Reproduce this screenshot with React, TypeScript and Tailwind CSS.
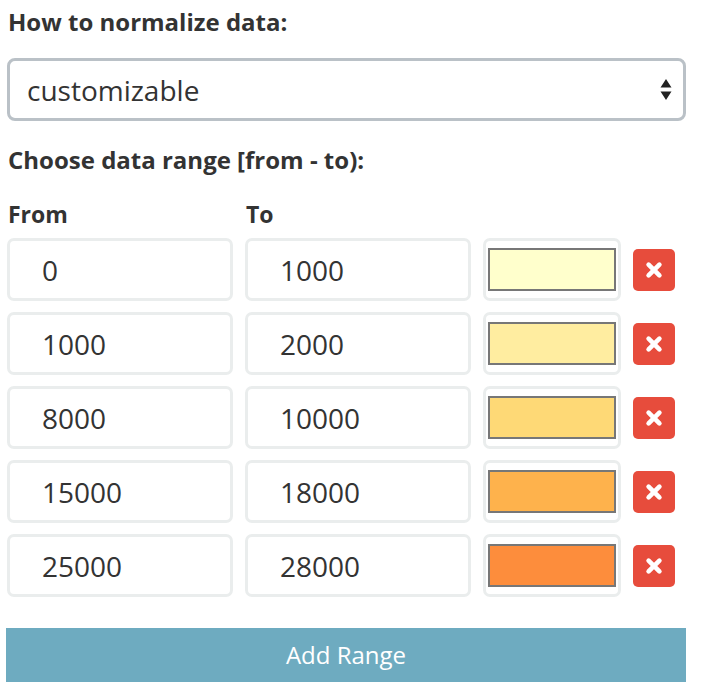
const RANGES = [
  { from: '0', to: '1000', color: '#ffffcc' },
  { from: '1000', to: '2000', color: '#ffeda0' },
  { from: '8000', to: '10000', color: '#fed976' },
  { from: '15000', to: '18000', color: '#feb24c' },
  { from: '25000', to: '28000', color: '#fd8d3c' },
]

function XIcon() {
  return (
    <svg width="18" height="18" viewBox="0 0 18 18" aria-hidden>
      <path d="M3.6 3.6 L14.4 14.4 M14.4 3.6 L3.6 14.4" stroke="#fff" strokeWidth="4.6" strokeLinecap="round" />
    </svg>
  )
}

export default function App() {
  return (
    <div className="w-[718px] h-[698px] bg-white text-[#333] pl-[7px] pt-[6px] font-['Open_Sans',sans-serif]">
      {/* Normalize */}
      <h3 className="text-[24px] font-bold leading-[32px] pl-px">How to normalize data:</h3>
      <div className="mt-[20px] w-[679px] h-[63px] border-[3px] border-[#bac1c7] rounded-[8px] flex items-center justify-between pl-[17px] pr-[11px]">
        <span className="text-[28px]">customizable</span>
        <svg width="12" height="24" viewBox="0 0 12 24" aria-hidden>
          <path d="M6 1 L11.5 9.5 L0.5 9.5 Z M0.5 13.5 L11.5 13.5 L6 22 Z" fill="#222" />
        </svg>
      </div>

      {/* Ranges */}
      <h3 className="mt-[23px] text-[24px] font-bold leading-[32px] pl-px">Choose data range [from - to):</h3>
      <div className="mt-[27px] mb-[13px] flex text-[23px] font-bold leading-[22px]">
        <div className="w-[238px] pl-px">From</div>
        <div className="pl-px">To</div>
      </div>
      <div className="grid grid-cols-[226px_226px_138px_42px] gap-x-[12px] gap-y-[11px] w-[679px]">
        {RANGES.map(r => (
          <div key={r.from} className="contents">
            <div className="h-[63px] border-[3px] border-[#eaeded] rounded-[7px] flex items-center pl-[32px] text-[28px]">{r.from}</div>
            <div className="h-[63px] border-[3px] border-[#eaeded] rounded-[7px] flex items-center pl-[32px] text-[28px]">{r.to}</div>
            <div className="h-[63px] border-[3px] border-[#eaeded] rounded-[7px] py-[7px] px-[2px]">
              <div className="w-full h-full border-2 border-[#777]" style={{ backgroundColor: r.color }} />
            </div>
            <div className="self-center">
              <button className="w-[42px] h-[42px] rounded-[5px] bg-[#e74c3c] flex items-center justify-center">
                <XIcon />
              </button>
            </div>
          </div>
        ))}
      </div>

      <button className="mt-[31px] -ml-px w-[680px] h-[54px] bg-[#6eabc0] text-white text-[24px] flex items-center justify-center">
        Add Range
      </button>
    </div>
  )
}
